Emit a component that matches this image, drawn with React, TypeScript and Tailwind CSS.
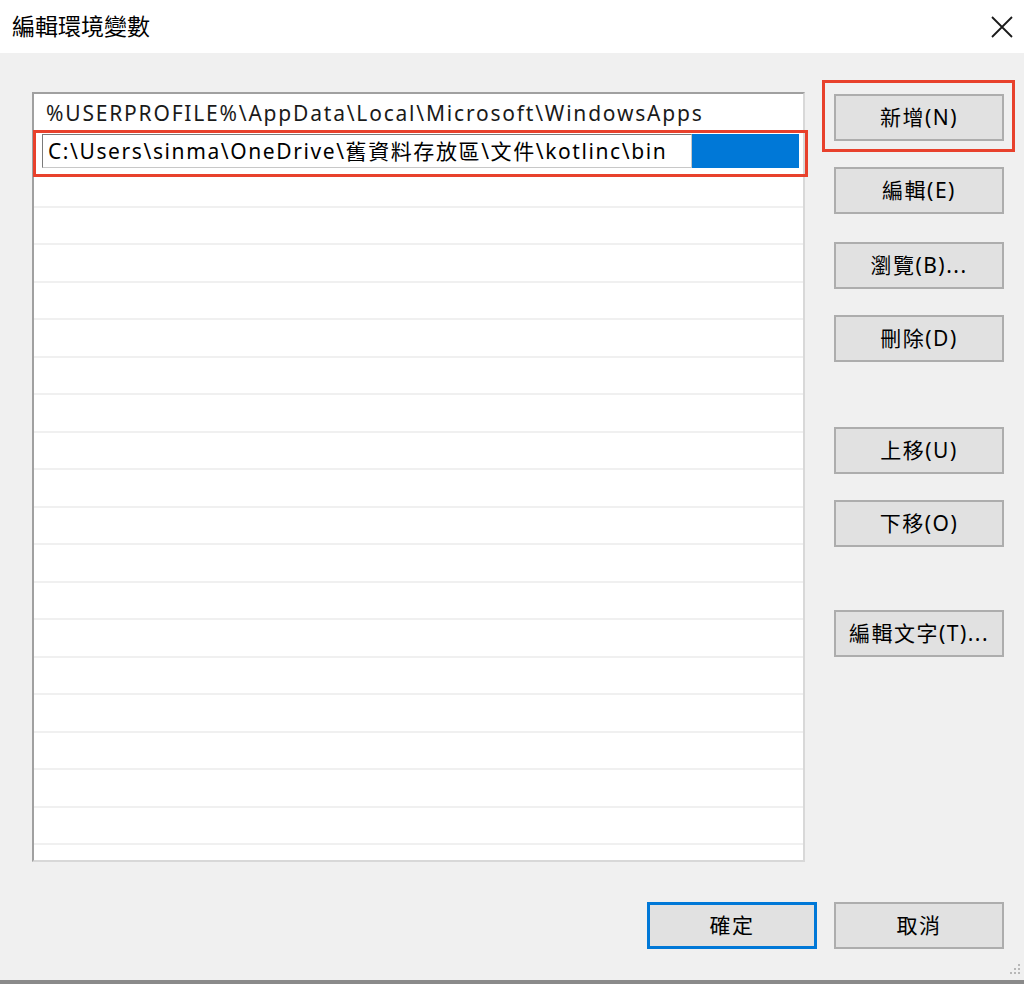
import React from "react";

const FONT = { fontFamily: '"Noto Sans", "Noto Sans CJK TC", sans-serif' };

const sideButtons = [
  { label: "新增(N)", gap: "mt-0", marked: true },
  { label: "編輯(E)", gap: "mt-[26px]" },
  { label: "瀏覽(B)...", gap: "mt-[28px]" },
  { label: "刪除(D)", gap: "mt-[26px]" },
  { label: "上移(U)", gap: "mt-[65px]" },
  { label: "下移(O)", gap: "mt-[26px]" },
  { label: "編輯文字(T)...", gap: "mt-[63px]" },
];

const WinButton = ({ label, primary }: { label: string; primary?: boolean }) => (
  <button
    className={`w-[170px] h-[47px] bg-[#e1e1e1] text-[21px] tracking-[1.5px] text-black ${
      primary ? "border-[3px] border-[#0078d7]" : "border-2 border-[#adadad]"
    }`}
  >
    {label}
  </button>
);

const App = () => {
  const rows = Array.from({ length: 21 }, (_, i) => i);

  return (
    <div
      className="w-[1024px] h-[984px] bg-[#f0f0f0] flex flex-col overflow-hidden relative border-b-[4px] border-[#8a8a8a]"
      style={FONT}
    >
      {/* title bar */}
      <div className="h-[53px] bg-white flex items-center justify-between pl-[12px] pr-[11px] shrink-0">
        <span className="text-[23px] text-black">編輯環境變數</span>
        <svg width="22" height="22" viewBox="0 0 22 22">
          <path d="M1 1 L21 21 M21 1 L1 21" stroke="#1a1a1a" strokeWidth="1.8" />
        </svg>
      </div>

      <div className="flex flex-1">
        {/* list */}
        <div className="ml-[32px] mt-[39px] w-[773px] h-[770px] bg-white border-2 border-[#a0a0a0] border-r-[#d8d8d8] border-b-[#d8d8d8] pt-[1px] overflow-hidden">
          {rows.map((i) => (
            <div
              key={i}
              className={`h-[37.5px] relative flex items-center ${
                i >= 2 ? "border-b-2 border-[#f0f0f0]" : ""
              }`}
            >
              {i === 0 && (
                <span className="pl-[12px] text-[21px] tracking-[1.8px] text-[#1a1a1a] whitespace-nowrap">
                  %USERPROFILE%\AppData\Local\Microsoft\WindowsApps
                </span>
              )}
              {i === 1 && (
                <div className="flex items-center h-full w-full pl-[8px] pr-[4px]">
                  <div className="h-[34px] w-[650px] border border-[#7a7a7a] border-r-[#c8c8c8] border-b-[#c8c8c8] bg-white flex items-center pl-[5px] text-[21px] tracking-[1.6px] text-black whitespace-nowrap overflow-hidden">
                    C:\Users\sinma\OneDrive\舊資料存放區\文件\kotlinc\bin
                  </div>
                  <div className="h-[34px] flex-1 bg-[#0078d7]" />
                </div>
              )}
            </div>
          ))}
        </div>

        {/* side buttons */}
        <div className="ml-[29px] mt-[41px] flex flex-col">
          {sideButtons.map((b) => (
            <div key={b.label} className={`${b.gap} relative`}>
              <WinButton label={b.label} />
              {b.marked && (
                <div className="absolute -left-[12px] -top-[14px] w-[193px] h-[72px] border-[3px] border-[#e8412c]" />
              )}
            </div>
          ))}
        </div>
      </div>

      {/* red marker around edited row */}
      <div className="absolute left-[33px] top-[130px] w-[775px] h-[47px] border-[3px] border-[#e8412c]" />

      {/* bottom buttons */}
      <div className="flex justify-end gap-[17px] pr-[20px] pb-[31px]">
        <WinButton label="確定" primary />
        <WinButton label="取消" />
      </div>

      {/* size grip */}
      <svg className="absolute right-[3px] bottom-[4px]" width="14" height="14" viewBox="0 0 14 14">
        {[
          [11, 2],
          [7, 6],
          [11, 6],
          [3, 10],
          [7, 10],
          [11, 10],
        ].map(([x, y]) => (
          <rect key={`${x}-${y}`} x={x} y={y} width="2" height="2" fill="#b8b8b8" />
        ))}
      </svg>
    </div>
  );
};

export default App;
